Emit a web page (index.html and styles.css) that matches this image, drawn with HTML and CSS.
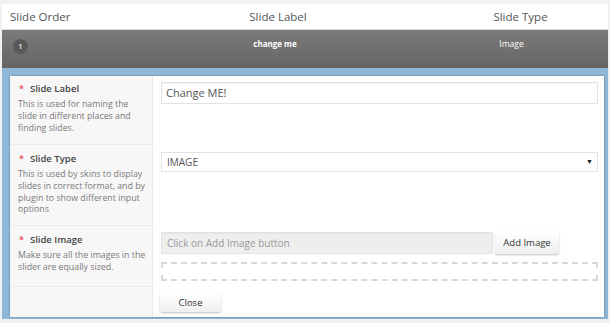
FILE: index.html
```html
<!DOCTYPE html>
<html>
<head>
<meta charset="utf-8">
<link rel="stylesheet" href="styles.css">
</head>
<body>
<div class="wrap">
  <div class="thead">
    <div class="th th-order">Slide Order</div>
    <div class="th th-label">Slide Label</div>
    <div class="th th-type">Slide Type</div>
  </div>
  <div class="slide-row">
    <div class="cell-order"><span class="badge">1</span></div>
    <div class="cell-label">change me</div>
    <div class="cell-type">Image</div>
  </div>
  <div class="editor">
    <div class="panel">
      <div class="frow">
        <div class="fl">
          <div class="flabel"><span class="req">*</span>Slide Label</div>
          <div class="fdesc">This is used for naming the slide in different places and finding slides.</div>
        </div>
        <div class="fr">
          <div class="input">Change ME!</div>
        </div>
      </div>
      <div class="frow">
        <div class="fl">
          <div class="flabel"><span class="req">*</span>Slide Type</div>
          <div class="fdesc">This is used by skins to display slides in correct format, and by plugin to show different input options</div>
        </div>
        <div class="fr">
          <div class="select"><span>IMAGE</span><span class="caret">▼</span></div>
        </div>
      </div>
      <div class="frow">
        <div class="fl">
          <div class="flabel"><span class="req">*</span>Slide Image</div>
          <div class="fdesc">Make sure all the images in the slider are equally sized.</div>
        </div>
        <div class="fr">
          <div class="imgline">
            <div class="input input-ro">Click on Add Image button</div>
            <div class="btn btn-add">Add Image</div>
          </div>
          <div class="dropzone"></div>
        </div>
      </div>
      <div class="frow frow-last">
        <div class="fl"></div>
        <div class="fr">
          <div class="btn btn-close">Close</div>
        </div>
      </div>
    </div>
  </div>
</div>
</body>
</html>
```

FILE: styles.css
```css
html, body {
  margin: 0;
  padding: 0;
  background: #f1f1f1;
  font-family: "Open Sans", "Liberation Sans", sans-serif;
  height: 323px;
  overflow: hidden;
}
.wrap {
  margin: 4px 2px 0 2px;
}
.thead {
  display: grid;
  grid-template-columns: 119px 314px 1fr;
  height: 25px;
  background: #fff;
  border-bottom: 1px solid #dcdcdc;
  align-items: center;
  font-size: 11.5px;
  color: #555;
}
.th-order { padding-left: 8px; }
.th-label, .th-type { text-align: center; }
.th-type { padding-right: 2px; }
.slide-row {
  display: grid;
  grid-template-columns: 119px 308px 1fr;
  height: 38px;
  background: linear-gradient(#7b7b7b, #656565);
  color: #fff;
  font-size: 8px;
}
.cell-order {
  display: flex;
  align-items: center;
  padding-left: 11px;
  padding-bottom: 6px;
}
.badge {
  display: inline-flex;
  align-items: center;
  justify-content: center;
  width: 15px;
  height: 15px;
  border-radius: 50%;
  background: #585858;
  color: #eee;
  font-size: 7.5px;
  font-weight: 600;
}
.cell-label {
  text-align: center;
  font-weight: 700;
  padding-top: 8px;
}
.cell-type {
  text-align: center;
  padding-top: 8px;
  padding-right: 14px;
  font-size: 8.5px;
}
.editor {
  background: #8eb7d8;
  padding: 8px 4px 10px 8px;
  box-sizing: border-box;
  height: 251px;
}
.panel {
  background: #fff;
  box-shadow: 0 0 2px rgba(0,0,0,0.35);
  display: flex;
  flex-direction: column;
}
.frow {
  display: grid;
  grid-template-columns: 143px 1fr;
}
.fl {
  background: #f7f7f7;
  border-right: 1px solid #e8e8e8;
  border-bottom: 1px solid #ececec;
  padding: 6px 6px 0 8px;
  box-sizing: border-box;
}
.frow:nth-child(1) { height: 69px; }
.frow:nth-child(2) { height: 81px; }
.frow:nth-child(3) { height: 61px; }
.frow-last { height: 30px; }
.frow-last .fl { border-bottom: none; }
.frow:nth-child(2) .fl, .frow:nth-child(3) .fl { padding-top: 7px; }
.flabel {
  font-size: 9.5px;
  font-weight: 600;
  color: #444;
  line-height: 14px;
}
.req {
  color: #e44;
  font-size: 9px;
  margin-right: 6px;
  margin-left: 1px;
}
.fdesc {
  font-size: 8.8px;
  line-height: 11.8px;
  color: #7a7a7a;
  margin-top: 3px;
}
.fr {
  padding: 6px 6px 0 8px;
}
.frow:nth-child(2) .fr { padding-top: 7px; }
.input {
  height: 22px;
  box-sizing: border-box;
  border: 1px solid #e2e2e2;
  box-shadow: inset 0 1px 1px rgba(0,0,0,0.04);
  font-size: 11px;
  color: #555;
  padding-left: 4px;
  line-height: 20px;
}
.select {
  height: 20px;
  box-sizing: border-box;
  border: 1px solid #e2e2e2;
  font-size: 10px;
  color: #555;
  padding: 0 4px 0 5px;
  line-height: 18px;
  display: flex;
  justify-content: space-between;
}
.caret {
  font-size: 7px;
  color: #222;
}
.imgline {
  display: flex;
  gap: 2px;
  align-items: flex-start;
}
.input-ro {
  width: 332px;
  background: #eee;
  color: #999;
  font-size: 10px;
  padding-left: 5px;
}
.btn {
  background: linear-gradient(#fff, #efefef);
  border-radius: 2px;
  box-shadow: 0 1px 2px rgba(0,0,0,0.25);
  font-size: 9.5px;
  color: #333;
  text-align: center;
}
.btn-add {
  width: 64px;
  height: 22px;
  line-height: 22px;
}
.dropzone {
  margin-top: 8px;
  height: 19px;
  box-sizing: border-box;
  border: 2px dashed #d8d8d8;
}
.btn-close {
  width: 61px;
  height: 19px;
  line-height: 19px;
  margin-left: -1px;
}
```
